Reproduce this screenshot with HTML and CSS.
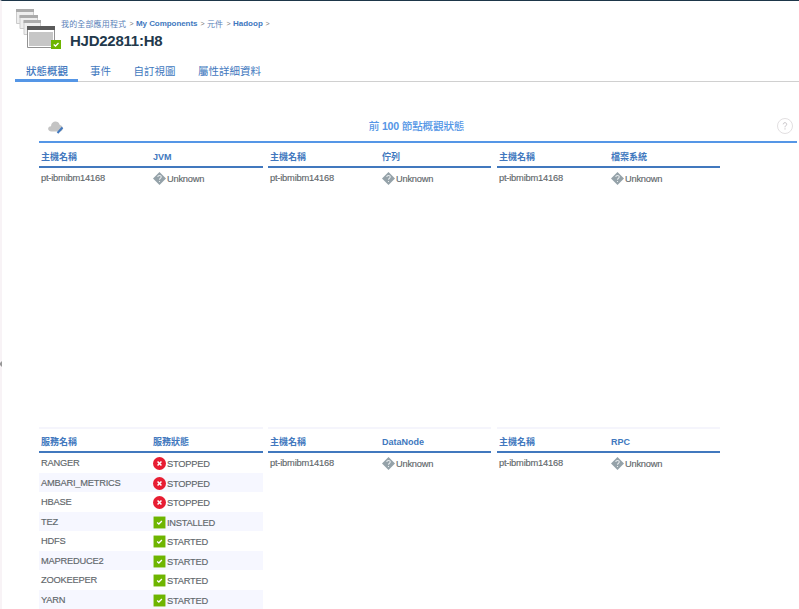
FILE: index.html
```html
<!DOCTYPE html>
<html lang="zh-Hant">
<head>
<meta charset="utf-8">
<title>HJD22811:H8</title>
<link rel="stylesheet" href="styles.css">
</head>
<body>
<svg width="0" height="0" class="defs">
  <symbol id="unknown" viewBox="0 0 12 12"><path d="M6 0L12 6L6 12L0 6Z" fill="#95a2a9"/><path d="M4.4 4.6C4.5 2.7 7.7 2.8 7.6 4.6C7.6 5.8 6 5.8 6 7.2M6 8.2V9.3" fill="none" stroke="#e8ecee" stroke-width="1"/></symbol>
  <symbol id="stopped" viewBox="0 0 12 12"><circle cx="6" cy="6" r="6" fill="#e71d32"/><path d="M4.2 4.2L7.8 7.8M7.8 4.2L4.2 7.8" stroke="#fff" stroke-width="1.4"/></symbol>
  <symbol id="ok" viewBox="0 0 12 12"><path d="M.5 .5H11.5V11.5H.5Z" fill="#6eb500"/><path d="M3.8 6L5.4 7.4L8.2 4.6" fill="none" stroke="#fff" stroke-width="1.2"/></symbol>
</svg>
<div class="app">
  <header class="head">
    <svg class="stack" width="46" height="41" viewBox="0 0 46 41">
      <g stroke="#cbcbcb" fill="#eee">
        <path d="M.5 .5H17.5V14.5H.5Z"/><path d="M0 1.5H18" stroke="#ababab" stroke-width="3"/>
        <path d="M4 6.5H21.5V19.5H4Z"/><path d="M3.500 7.500H22" stroke="#ababab" stroke-width="3"/>
        <path d="M8 12.500H24.500V25.500H8Z"/><path d="M7.500 12.500H25" stroke="#ababab" stroke-width="3"/>
      </g>
      <path d="M11.500 18.500H38.500V38.500H11.500Z" fill="#fff" stroke="#929292"/>
      <path d="M13 23H37V37H13Z" fill="#c6c6c6"/><path d="M11 17H39V21H11Z" fill="#5a5a5a"/>
      <path d="M35 31H45V40H35Z" fill="#6eb500"/><path d="M37.700 35.500L39.500 37L42.500 34" fill="none" stroke="#fff" stroke-width="1.300"/>
    </svg>
    <div class="titles">
      <nav class="crumbs"><span class="c1">我的全部應用程式</span><i>&gt;</i><b class="c2">My Components</b><i>&gt;</i><span class="c3">元件</span><i>&gt;</i><b class="c4">Hadoop</b><i>&gt;</i></nav>
      <h1>HJD22811:H8</h1>
    </div>
  </header>
  <nav class="tabs"><a class="active">狀態概觀</a><a>事件</a><a>自訂視圖</a><a>屬性詳細資料</a></nav>
  <main>
    <div class="bar">
      <svg class="cloud" width="16" height="14" viewBox="0 0 16 14"><path d="M3.500 10.500C-1 10.500 -.800 5.300 3 5.200C3.300 -.500 10.500 -1 11.800 4C16 4.500 15.500 10.500 12 10.500Z" fill="#c4c4c4"/><path d="M9.500 12L14.500 6.500" stroke="#4178be" stroke-width="2"/></svg>
      <h2>前 <span>100</span> 節點概觀狀態</h2>
      <svg class="help" width="16" height="16" viewBox="0 0 16 16"><circle cx="8" cy="8" r="7.500" fill="none" stroke="#e2dfe1"/><path d="M6.200 6.300C6.300 4 9.800 4.300 9.700 6.300C9.700 7.700 8 7.600 8 9.300M8 10.300V11.500" fill="none" stroke="#c6c3c7"/></svg>
    </div>
    <div class="grid top">
      <section><div class="th"><b>主機名稱</b><b>JVM</b></div><div class="row"><span class="host">pt-ibmibm14168</span><span class="st"><svg><use href="#unknown"/></svg>Unknown</span></div></section>
      <section><div class="th"><b>主機名稱</b><b>佇列</b></div><div class="row"><span class="host">pt-ibmibm14168</span><span class="st"><svg><use href="#unknown"/></svg>Unknown</span></div></section>
      <section><div class="th"><b>主機名稱</b><b>檔案系統</b></div><div class="row"><span class="host">pt-ibmibm14168</span><span class="st"><svg><use href="#unknown"/></svg>Unknown</span></div></section>
    </div>
    <div class="grid bottom">
      <section><div class="th"><b>服務名稱</b><b>服務狀態</b></div>
        <div class="row"><span>RANGER</span><span class="st"><svg><use href="#stopped"/></svg>STOPPED</span></div>
        <div class="row"><span>AMBARI_METRICS</span><span class="st"><svg><use href="#stopped"/></svg>STOPPED</span></div>
        <div class="row"><span>HBASE</span><span class="st"><svg><use href="#stopped"/></svg>STOPPED</span></div>
        <div class="row"><span>TEZ</span><span class="st"><svg><use href="#ok"/></svg>INSTALLED</span></div>
        <div class="row"><span>HDFS</span><span class="st"><svg><use href="#ok"/></svg>STARTED</span></div>
        <div class="row"><span>MAPREDUCE2</span><span class="st"><svg><use href="#ok"/></svg>STARTED</span></div>
        <div class="row"><span>ZOOKEEPER</span><span class="st"><svg><use href="#ok"/></svg>STARTED</span></div>
        <div class="row"><span>YARN</span><span class="st"><svg><use href="#ok"/></svg>STARTED</span></div>
      </section>
      <section><div class="th"><b>主機名稱</b><b>DataNode</b></div><div class="row"><span class="host">pt-ibmibm14168</span><span class="st"><svg><use href="#unknown"/></svg>Unknown</span></div></section>
      <section><div class="th"><b>主機名稱</b><b>RPC</b></div><div class="row"><span class="host">pt-ibmibm14168</span><span class="st"><svg><use href="#unknown"/></svg>Unknown</span></div></section>
    </div>
  </main>
</div>
<div class="handle"></div>
</body>
</html>
```
FILE: styles.css
```css
* { box-sizing: border-box; }
body { margin: 0; background: #fff; font-family: "Liberation Sans", "Noto Sans CJK TC", sans-serif; }
.defs { position: absolute; }
.app { height: 609px; overflow: hidden; border-top: 1px solid #1d3649; border-left: 2px solid #f8f3f6; }
.head { display: flex; height: 61px; padding: 8px 0 0 14px; }
.stack { flex: none; }
.titles { padding-top: 8px; margin-left: -1px; }
.crumbs { display: flex; align-items: center; height: 12px; font-size: 8px; color: #5a7fb8; white-space: nowrap; }
.crumbs b { color: #4178be; }
.crumbs i { width: 9px; text-align: center; font-style: normal; font-size: 7px; color: #777; }
.c1 { width: 66px; letter-spacing: .15px; }
.c2 { width: 62px; letter-spacing: -.06px; }
.c3 { width: 17px; }
.c4 { width: 30px; }
h1 { margin: 3px 0 0 9px; font-size: 15px; line-height: 18px; color: #23394c; letter-spacing: -.25px; }
.tabs { display: flex; height: 20px; margin-left: 13px; box-shadow: inset 0 -1px #d0d0d0; font-size: 10.5px; line-height: 18px; color: #4178be; }
.tabs a { margin-right: .5px; padding: 0 11px; white-space: nowrap; }
.tabs .active { width: 63px; margin-right: 1px; border-bottom: 3px solid #5596e6; font-weight: 500; }
main { padding-left: 37px; }
.bar { display: flex; align-items: center; justify-content: space-between; height: 61px; padding: 28px 4px 0 9px; margin-right: 2px; border-bottom: 2px solid #5596e6; }
.bar svg { flex: none; }
.cloud { margin-top: 5px; }
h2 { margin: 0 8px 0 0; font-size: 10.6px; font-weight: 500; line-height: 16px; letter-spacing: -.18px; color: #5596e6; }
h2 span { font-weight: bold; }
.grid { display: grid; grid-template-columns: 224px 224px 223px; column-gap: 5px; align-items: start; }
.grid section:nth-child(2) { width: 223px; }
.top { height: 284px; }
.th, .row { display: grid; grid-template-columns: 114px 1fr; }
.th { height: 25px; padding: 4px 2px 0; align-items: center; border-bottom: 2px solid #4178be; font-size: 9px; line-height: 12px; color: #4178be; }
.bottom .th { height: 26px; padding-top: 3px; border-top: 2px solid #f5f5fc; }
.row { height: 20px; padding-left: 2px; font-size: 9.3px; line-height: 20px; color: #5f676b; letter-spacing: -.22px; -webkit-text-stroke: .15px #5f676b; }
.host { letter-spacing: -.2px; }
.th b:last-child { margin-left: -2px; }
.row .st { margin-left: -2px; }
.row:nth-of-type(odd) { height: 19px; background: #f6f7ff; }
.st { display: flex; align-items: center; padding-top: 1px; }
.st svg { width: 13px; height: 13px; margin: -2px 1px 0 0; }
.handle { position: absolute; left: -1px; top: 361px; border: solid transparent; border-width: 3px 3px 3px 0; border-right-color: #999; }
```
